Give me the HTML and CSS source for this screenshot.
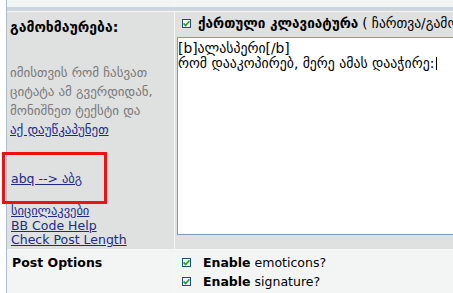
FILE: index.html
```html
<!DOCTYPE html>
<html>
<head>
<meta charset="utf-8">
<link rel="stylesheet" href="styles.css">
</head>
<body>
<div class="frame">
  <div class="row top"><div class="cell left"></div><div class="cell right"></div></div>
  <div class="spacer"></div>
  <div class="row main">
    <div class="cell left">
      <div class="title">გამოხმაურება:</div>
      <p class="hint">იმისთვის რომ ჩასვათ<br>ციტატა ამ გვერდიდან,<br>მონიშნეთ ტექსტი და<br><a href="#" class="glink">აქ დაუწკაპუნეთ</a></p>
      <div class="abq"><a href="#">abq --&gt; აბგ</a></div>
      <div class="links">
        <a href="#" class="geo">სიცილაკვები</a>
        <a href="#">BB Code Help</a>
        <a href="#">Check Post Length</a>
      </div>
    </div>
    <div class="cell right">
      <div class="kb"><span class="cb"><svg viewBox="0 0 9 9" width="9" height="9"><path d="M1.6 4.4 L3.6 6.6 L7.4 2.2" fill="none" stroke="#22a022" stroke-width="1.6"/></svg></span><b>ქართული კლავიატურა</b> ( ჩართვა/გამორთვა )</div>
      <div class="ta">
        <div>[b]ალასპერი[/b]</div>
        <div>რომ დააკოპირებ, მერე ამას დააჭირე:<span class="caret"></span></div>
      </div>
    </div>
  </div>
  <div class="row bottom">
    <div class="cell left"><div class="po">Post Options</div></div>
    <div class="cell right">
      <div class="opt"><span class="cb"><svg viewBox="0 0 9 9" width="9" height="9"><path d="M1.6 4.4 L3.6 6.6 L7.4 2.2" fill="none" stroke="#22a022" stroke-width="1.6"/></svg></span><b>Enable</b> emoticons?</div>
      <div class="opt"><span class="cb"><svg viewBox="0 0 9 9" width="9" height="9"><path d="M1.6 4.4 L3.6 6.6 L7.4 2.2" fill="none" stroke="#22a022" stroke-width="1.6"/></svg></span><b>Enable</b> signature?</div>
    </div>
  </div>
</div>
<div class="redbox"></div>
</body>
</html>
```
FILE: styles.css
```css
html, body {
  margin: 0;
  padding: 0;
  background: #ffffff;
  overflow: hidden;
  width: 453px;
  height: 293px;
}
body {
  font-family: "DejaVu Sans", Verdana, sans-serif;
  font-size: 12.5px;
  color: #000;
}
.frame {
  margin-left: 6px;
  border-left: 1px solid #aebdcc;
  background: #f5f7f6;
  display: flex;
  flex-direction: column;
  gap: 1px;
  width: 446px;
  height: 300px;
}
.row {
  display: grid;
  grid-template-columns: 167px 1fr;
  column-gap: 1px;
}
.top { height: 7px; }
.top .cell { background: #f3f5f4; }
.spacer {
  height: 4px;
  background: #cdd6df;
  margin-top: -1px;
}
.cell { overflow: hidden; }
.main .cell { background: #dfe0e0; }
.bottom { flex: 1; }
.bottom .cell { background: #f3f5f4; }

.main .left {
  padding: 6px 0 0 3px;
}
.title {
  font-weight: bold;
  font-size: 14px;
  line-height: 19px;
}
.hint {
  margin: 26px 0 0 0;
  font-size: 13px;
  line-height: 19px;
  color: #7a7a7a;
}
a {
  color: #1b2b8c;
  text-decoration: underline;
}
.abq {
  margin-top: 30px;
  line-height: 19px;
  padding-left: 1px;
}
.links {
  margin-top: 14px;
  display: flex;
  flex-direction: column;
  padding-left: 1px;
}
.links a {
  line-height: 14px;
}
.links a.geo {
  line-height: 17px;
}
.main .right {
  padding: 1px 0 14px 2px;
  display: flex;
  flex-direction: column;
}
.kb {
  line-height: 20px;
  font-size: 13.5px;
  padding-left: 5px;
  white-space: nowrap;
  display: flex;
  align-items: center;
}
.kb .cb { margin-right: 7px; }
.kb b { margin-right: 4px; }
.cb {
  width: 7px;
  height: 7px;
  border: 1px solid #1d4f7e;
  background: #f4f6f8;
  display: inline-flex;
  align-items: center;
  justify-content: center;
  flex: none;
  overflow: hidden;
}
.cb svg { display: block; flex: none; }
.ta {
  margin-top: 4px;
  height: 198px;
  border: 1px solid #7f9db9;
  border-right: none;
  background: #ffffff;
  font-size: 13.8px;
  line-height: 15px;
  padding: 3px 0 0 0;
  box-sizing: border-box;
  white-space: nowrap;
}
.caret {
  display: inline-block;
  width: 1px;
  height: 13px;
  background: #000;
  vertical-align: -2px;
  margin-left: 2px;
}
.bottom .left { padding: 3px 0 0 5px; }
.po {
  font-weight: bold;
  line-height: 19px;
}
.bottom .right { padding: 3px 0 0 7px; }
.opt {
  line-height: 19px;
  display: flex;
  align-items: center;
  white-space: nowrap;
}
.opt .cb { margin-right: 12px; }
.opt b { margin-right: 4px; }

.redbox {
  position: absolute;
  left: 2px;
  top: 152px;
  width: 99px;
  height: 46px;
  border: 3px solid #ee1111;
}
```
